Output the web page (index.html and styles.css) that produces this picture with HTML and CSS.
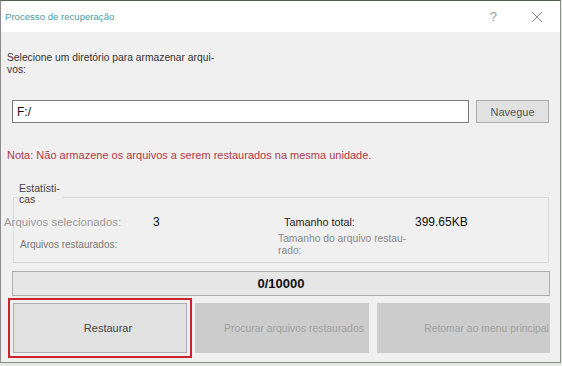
FILE: index.html
```html
<!DOCTYPE html>
<html lang="pt">
<head>
    <meta charset="UTF-8">
    <title>Processo de recuperação</title>
    <link rel="stylesheet" href="styles.css">
</head>
<body>

    <div class="window">
        <div class="titlebar">
            <span class="title">Processo de recuperação</span>
            <span class="help">?</span>
            <svg class="close" width="12" height="12" viewBox="0 0 12 12">
                <path d="M1 1 L11 11 M11 1 L1 11" stroke="#8a8a8a" stroke-width="1" fill="none"/>
            </svg>
        </div>

        <div class="dir-label">Selecione um diretório para armazenar arqui-<br>vos:</div>

        <div class="path-row">
            <input type="text" class="path-input" value="F:/">
            <button type="button" class="browse-button">Navegue</button>
        </div>

        <div class="note">Nota: Não armazene os arquivos a serem restaurados na mesma unidade.</div>

        <div class="stats">
            <div class="stats-legend">Estatísti-<br>cas</div>
            <div class="stats-grid">
                <span class="stat-label selected">Arquivos selecionados:</span>
                <span class="stat-value">3</span>
                <span class="stat-label total">Tamanho total:</span>
                <span class="stat-value">399.65KB</span>

                <span class="stat-label restored">Arquivos restaurados:</span>
                <span class="stat-value"></span>
                <span class="stat-label restored-size">Tamanho do arquivo restau-<br>rado:</span>
                <span class="stat-value"></span>
            </div>
        </div>

        <div class="progress">0/10000</div>

        <div class="actions">
            <button type="button" class="action-button restore-button">Restaurar</button>
            <button type="button" class="action-button browse-restored" disabled>Procurar arquivos restaurados</button>
            <button type="button" class="action-button back-button" disabled>Retomar ao menu principal</button>
        </div>
    </div>

</body>
</html>
```

FILE: styles.css
```css
body {
    margin: 0;
    padding: 0;
    background-color: #e6e8e6;
    font-family: "Liberation Sans", Arial, sans-serif;
}

.window {
    width: 561px;
    height: 363px;
    box-sizing: border-box;
    background-color: #f0f0f0;
    border: 1px solid #8c8c8c;
    border-top: 1px solid #56604e;
}

.titlebar {
    height: 31px;
    background-color: #ffffff;
    display: flex;
    align-items: center;
    padding-left: 4px;
}

.title {
    font-size: 9.6px;
    color: #4f9aa6;
    flex: 1;
}

.help {
    font-size: 13px;
    color: #9a9a9a;
    margin-right: 34px;
}

.close {
    margin-right: 17px;
}

.dir-label {
    margin-top: 20px;
    padding-left: 6px;
    font-size: 10.3px;
    line-height: 12px;
    color: #333;
}

.path-row {
    display: flex;
    gap: 7px;
    margin-top: 24px;
    padding-left: 11px;
}

.path-input {
    width: 457px;
    height: 23px;
    box-sizing: border-box;
    margin: 0;
    border: 1px solid #7a7a7a;
    padding: 0 4px;
    font-family: "Liberation Sans", Arial, sans-serif;
    font-size: 12px;
    color: #111;
    background-color: #ffffff;
    outline: none;
}

.browse-button {
    width: 73px;
    height: 23px;
    margin: 0;
    box-sizing: border-box;
    border: 1px solid #adadad;
    background-color: #e1e1e1;
    font-family: "Liberation Sans", Arial, sans-serif;
    font-size: 11px;
    color: #555;
    padding: 0;
}

.note {
    margin-top: 25px;
    padding-left: 6px;
    font-size: 11px;
    line-height: 14px;
    color: #b03848;
}

.stats {
    position: relative;
    margin-top: 35px;
    margin-left: 12px;
    width: 536px;
    height: 66px;
    box-sizing: border-box;
    border: 1px solid #dadada;
    padding-top: 17px;
}

/* legend sits over the top border */
.stats-legend {
    position: absolute;
    left: 5px;
    top: -15px;
    background-color: #f0f0f0;
    padding: 0 2px 0 0;
    font-size: 10.5px;
    line-height: 11px;
    color: #444;
}

.stats-grid {
    display: grid;
    grid-template-columns: 133px 125px 137px 1fr;
    grid-template-rows: 14px 24px;
    row-gap: 4px;
    align-items: center;
    padding-left: 6px;
}

.stat-label {
    font-size: 10px;
    line-height: 12px;
}

.selected {
    margin-left: -16px;
    font-size: 11.4px;
    color: #9a9a9a;
    white-space: nowrap;
}

.total {
    margin-left: 6px;
    font-size: 10.8px;
    color: #222;
}

.restored {
    color: #777;
}

.restored-size {
    font-size: 10.3px;
    color: #8a8a8a;
    white-space: nowrap;
}

.stat-value {
    font-size: 12px;
    color: #111;
}

.progress {
    margin-top: 8px;
    margin-left: 11px;
    width: 538px;
    height: 25px;
    box-sizing: border-box;
    border: 1px solid #adadad;
    background-color: #e6e6e6;
    display: flex;
    align-items: center;
    justify-content: center;
    font-size: 13px;
    font-weight: bold;
    color: #111;
}

.actions {
    display: flex;
    gap: 8px;
    margin-top: 7px;
    padding-left: 12px;
}

.action-button {
    height: 50px;
    box-sizing: border-box;
    margin: 0;
    font-family: "Liberation Sans", Arial, sans-serif;
    font-size: 10.4px;
    padding: 0;
    white-space: nowrap;
}

.restore-button {
    width: 174px;
    background-color: #e1e1e1;
    border: 1px solid #adadad;
    color: #444;
    font-size: 11px;
    padding-left: 16px;
    outline: 2px solid #c9232f;
    outline-offset: 3px;
}

.browse-restored {
    width: 174px;
    background-color: #cccccc;
    border: 1px solid #cccccc;
    color: #a0a0a0;
    padding-left: 24px;
}

.back-button {
    width: 173px;
    background-color: #cccccc;
    border: 1px solid #cccccc;
    color: #a0a0a0;
    padding-left: 46px;
}
```
